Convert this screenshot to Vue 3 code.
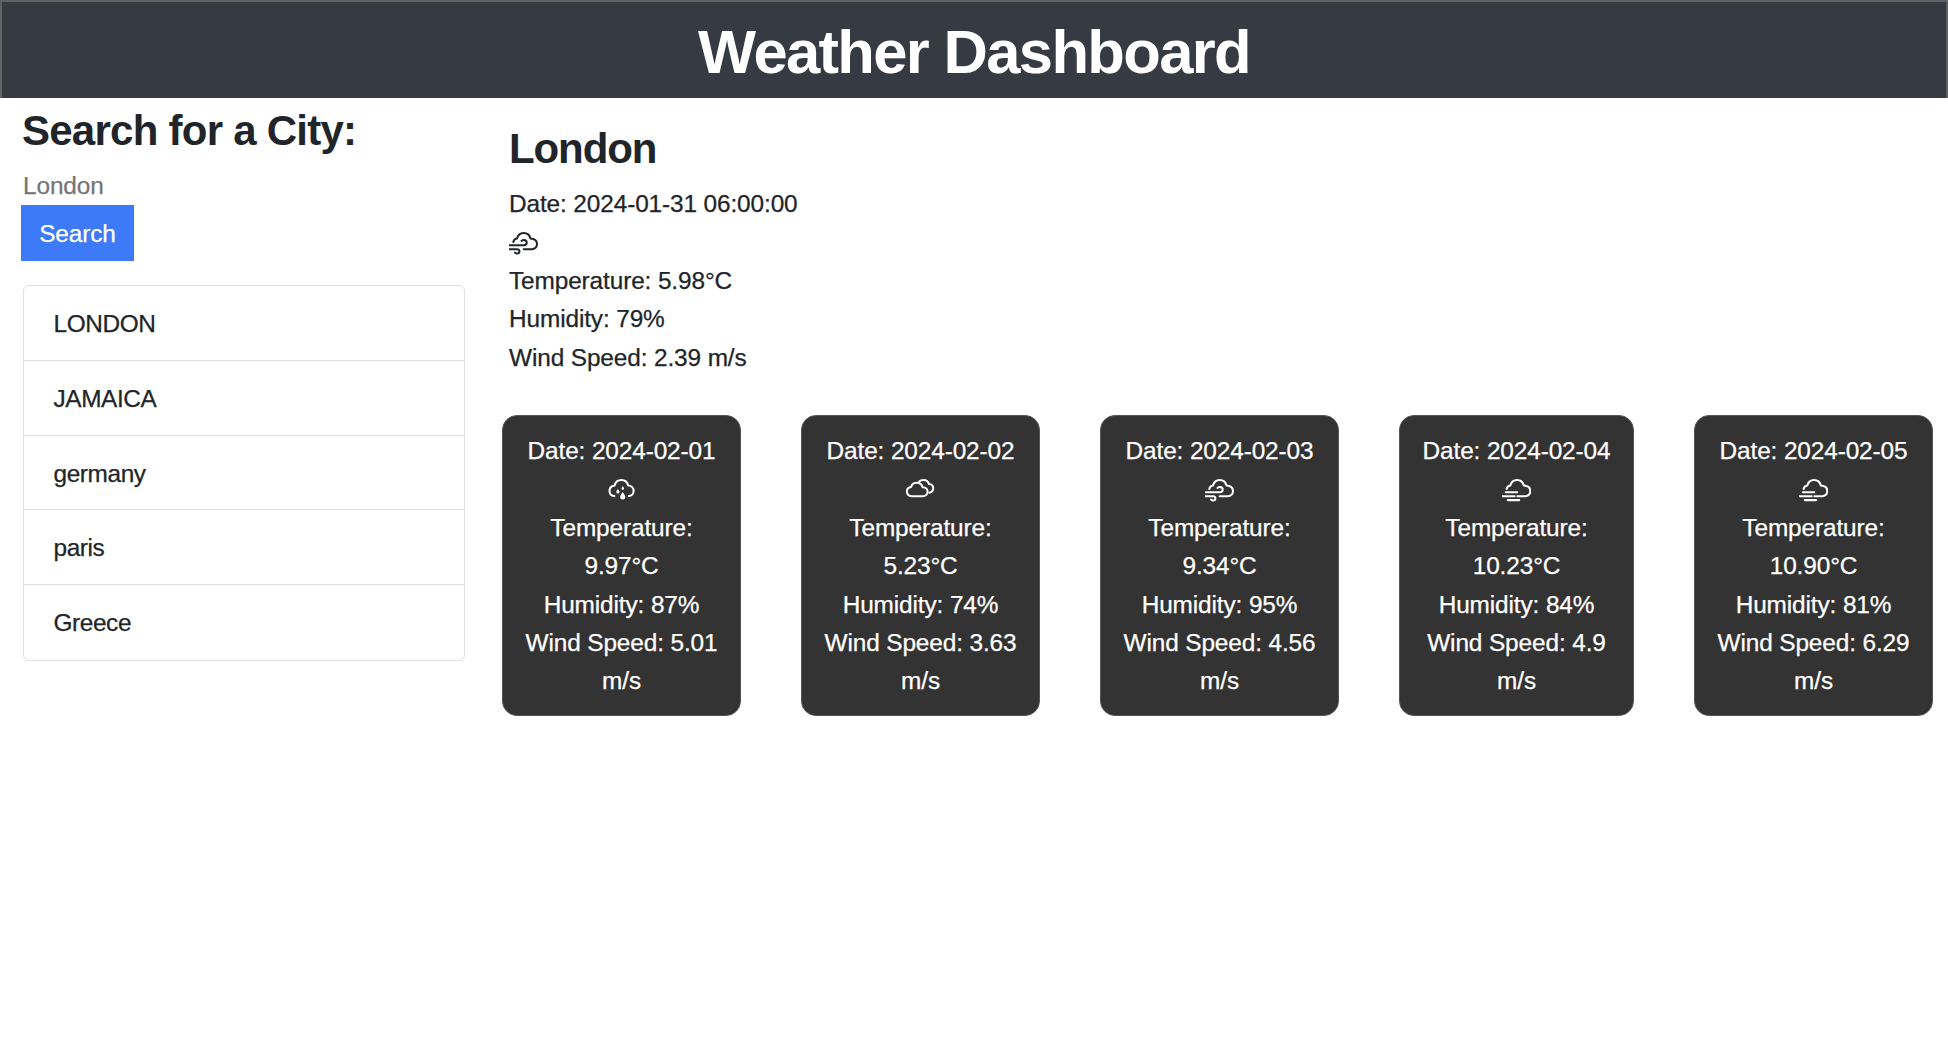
<script setup>
import { h } from 'vue'

const cities = ['LONDON', 'JAMAICA', 'germany', 'paris', 'Greece']

const days = [
  { date: '2024-02-01', icon: 'rain', temp: '9.97', humidity: 87, wind: '5.01' },
  { date: '2024-02-02', icon: 'cloudy', temp: '5.23', humidity: 74, wind: '3.63' },
  { date: '2024-02-03', icon: 'windy', temp: '9.34', humidity: 95, wind: '4.56' },
  { date: '2024-02-04', icon: 'fog', temp: '10.23', humidity: 84, wind: '4.9' },
  { date: '2024-02-05', icon: 'fog', temp: '10.90', humidity: 81, wind: '6.29' },
]

const icons = {
  windy: {
    box: '9.3 0 29 38',
    lines: [
      'M13.6 18C14 15.9 15.3 14.6 17.3 14.4C18.2 11 20.8 8.9 24 8.9C27.4 8.9 30 11.2 30.8 14.5C34.8 14.7 37.3 17 37.3 20.1C37.3 23 35 25.2 32.2 25.2H24',
      'M9.8 21.3H24.2C25.9 21.3 27 20 27 18.5C27 16.9 25.8 15.9 24.3 15.9C23.3 15.9 22.5 16.2 21.9 16.9',
      'M9.8 25.2H17.4C18.8 25.2 19.7 26.1 19.7 27.3C19.7 28.6 18.8 29.5 17.5 29.5C16.6 29.5 15.9 29.2 15.4 28.6',
    ],
    drops: [],
  },
  rain: {
    box: '7 0 29 38',
    lines: [
      'M14.3 25.1C11.5 24.8 9.5 22.8 9.5 20C9.5 17 11.7 15 14.6 14.6C15.4 11 18 9 21.4 9C24.8 9 27.4 11.3 28.2 14.6C31.4 14.7 33.6 17 33.6 19.9C33.6 22.8 31.6 25 28.8 25.1',
    ],
    drops: [
      'M22.7 21C23.7 22.4 25.2 24.4 25.2 26A2.5 2.5 0 0 1 20.2 26C20.2 24.4 21.7 22.4 22.7 21Z',
      'M17.9 18C18.5 19 19.5 20.1 19.5 21A1.6 1.6 0 0 1 16.3 21C16.3 20.1 17.3 19 17.9 18Z',
      'M22.8 15.2C23.3 15.9 24.1 16.8 24.1 17.5A1.3 1.3 0 0 1 21.5 17.5C21.5 16.8 22.3 15.9 22.8 15.2Z',
    ],
  },
  cloudy: {
    box: '10 0 29 38',
    lines: [
      'M15.6 25.2C12.6 25.2 10.9 23 10.9 20.6C10.9 18 12.6 16.2 15.1 15.9C15.8 13.2 18 11.7 20.8 11.7C23.7 11.7 25.9 13.5 26.6 16.2C29.6 16.2 31.6 18.1 31.6 20.7C31.6 23.2 29.6 25.2 27 25.2Z',
      'M23.2 10.5C24.3 9.4 25.8 8.9 27.4 8.9C30.2 8.9 32.3 10.6 32.9 13.1C35.6 13.2 37.2 15 37.2 17.3C37.2 19.7 35.7 21.4 33.4 21.7',
    ],
    drops: [],
  },
  fog: {
    box: '12 0 29 38',
    lines: [
      'M16.6 18C17 15.9 18.3 14.6 20.3 14.4C21.2 11 23.8 8.9 27 8.9C30.4 8.9 33 11.2 33.8 14.5C37.8 14.7 40.3 17 40.3 20.1C40.3 23 38 25.2 35.2 25.2H27.4',
      'M15.8 21.3H27.2',
      'M12.6 25.2H24.6',
      'M17.8 29.1H29.2',
    ],
    drops: [],
  },
}

const WeatherIcon = (props) => {
  const icon = icons[props.name]
  return h('svg', { width: 29, height: 38, viewBox: icon.box }, [
    ...icon.lines.map((d) =>
      h('path', {
        d,
        fill: 'none',
        stroke: 'currentColor',
        'stroke-width': 2.05,
        'stroke-linecap': 'round',
        'stroke-linejoin': 'round',
      }),
    ),
    ...icon.drops.map((d) => h('path', { d, fill: 'currentColor' })),
  ])
}
WeatherIcon.props = ['name']
</script>

<template>
  <div class="page">
    <header class="banner"><h1>Weather Dashboard</h1></header>
    <div class="columns">
      <aside class="sidebar">
        <h2>Search for a City:</h2>
        <input class="field" type="text" placeholder="London" />
        <button class="search" type="button">Search</button>
        <ul class="history">
          <li v-for="city in cities" :key="city">{{ city }}</li>
        </ul>
      </aside>
      <main class="content">
        <section class="today">
          <h2>London</h2>
          <p>Date: 2024-01-31 06:00:00</p>
          <p class="icon"><WeatherIcon name="windy" /></p>
          <p>Temperature: 5.98°C</p>
          <p>Humidity: 79%</p>
          <p>Wind Speed: 2.39 m/s</p>
        </section>
        <section class="forecast">
          <article v-for="day in days" :key="day.date" class="card">
            <p>Date: {{ day.date }}</p>
            <p class="icon"><WeatherIcon :name="day.icon" /></p>
            <p>Temperature:<br />{{ day.temp }}°C</p>
            <p>Humidity: {{ day.humidity }}%</p>
            <p>Wind Speed: {{ day.wind }}<br />m/s</p>
          </article>
        </section>
      </main>
    </div>
  </div>
</template>

<style>
body {
  margin: 0;
  background: #fff;
}
</style>

<style scoped>
.page {
  min-height: 1042px;
  color: #212529;
  font-family: "Helvetica Neue", "Liberation Sans", Arial, sans-serif;
  font-size: 24.4px;
  line-height: 38.4px;
  letter-spacing: -0.12px;
  -webkit-text-stroke: 0.25px currentColor;
}
h1,
h2,
p,
ul {
  margin: 0;
  padding: 0;
}
.banner {
  box-sizing: border-box;
  height: 98px;
  border: 2px solid #606266;
  border-bottom: 0;
  background: #363a42;
  color: #fff;
  text-align: center;
}
h1 {
  padding-top: 14px;
  font-size: 61.5px;
  line-height: 72px;
  letter-spacing: -1.65px;
  -webkit-text-stroke: 0;
}
h2 {
  font-size: 42px;
  line-height: 50px;
  letter-spacing: -0.75px;
  -webkit-text-stroke: 0;
}
.columns {
  display: flex;
}
.sidebar {
  display: flex;
  flex-direction: column;
  align-items: flex-start;
  width: 442px;
  padding: 8px 37px 0 23px;
}
.sidebar h2 {
  margin-left: -1px;
}
.field {
  width: 300px;
  height: 38px;
  margin-top: 11px;
  padding: 0;
  border: 0;
  outline: 0;
  background: transparent;
  font: inherit;
  letter-spacing: inherit;
}
.field::placeholder {
  color: #757575;
  opacity: 1;
}
.search {
  width: 113px;
  height: 56px;
  margin-left: -2px;
  padding: 2px 0 0;
  border: 0;
  background: #3d7af8;
  color: #fff;
  font: inherit;
  letter-spacing: inherit;
}
.history {
  box-sizing: border-box;
  width: 442px;
  height: 376px;
  margin-top: 24px;
  border: 1px solid #dfdfdf;
  border-radius: 6px;
  list-style: none;
}
.history li {
  box-sizing: border-box;
  height: 74.8px;
  padding: 19px 29.5px 0;
  border-bottom: 1px solid #dfdfdf;
  letter-spacing: -0.4px;
}
.history li:last-child {
  border-bottom: 0;
}
.content {
  width: 1431px;
}
.today {
  padding: 26px 0 0 7px;
}
.today h2 {
  margin-bottom: 11px;
  letter-spacing: -1.1px;
}
.icon {
  display: flex;
  height: 38.4px;
}
.icon svg {
  margin-top: 1px;
}
.forecast {
  display: flex;
  justify-content: space-between;
  margin-top: 38px;
}
.card {
  box-sizing: border-box;
  width: 239px;
  height: 301px;
  padding-top: 16px;
  border: 1px solid #555;
  border-radius: 15px;
  background: #333;
  color: #fff;
  text-align: center;
}
.card:nth-child(4) {
  width: 235px;
}
.card .icon {
  justify-content: center;
}
</style>
